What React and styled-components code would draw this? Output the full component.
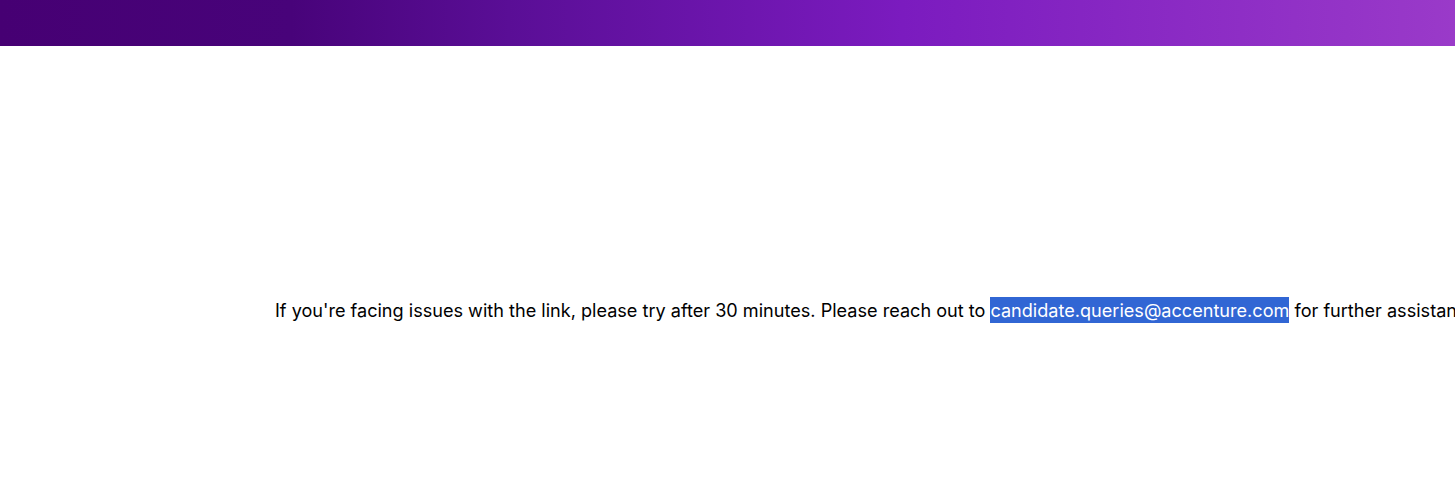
import React from 'react'
import styled, { createGlobalStyle } from 'styled-components'

const GlobalStyle = createGlobalStyle`
  html, body {
    margin: 0;
    padding: 0;
    background: #ffffff;
    overflow: hidden;
  }
`

export default function App() {
  return (
    <Page>
      <GlobalStyle />
      <TopBar />
      <Content>
        <Message>
          If you're facing issues with the link, please try after 30 minutes. Please reach out to{' '}
          <Mail>candidate.queries@accenture.com</Mail> for further assistance.
        </Message>
      </Content>
    </Page>
  )
}

const Page = styled.div`
  width: 1455px;
  height: 481px;
  overflow: hidden;
  font-family: Inter, "Liberation Sans", sans-serif;
`

const TopBar = styled.div`
  height: 46px;
  background: linear-gradient(90deg, #460073 0%, #48037a 20%, #5a0e96 35%, #7b1bbf 62%, #9a3ac9 100%);
`

const Content = styled.div`
  padding: 251px 0 0 275px;
`

const Message = styled.p`
  margin: 0;
  white-space: nowrap;
  font-size: 18.1px;
  line-height: 26px;
  color: #000000;
`

const Mail = styled.span`
  display: inline-block;
  line-height: 26px;
  background: #3166d4;
  color: #ffffff;
`
